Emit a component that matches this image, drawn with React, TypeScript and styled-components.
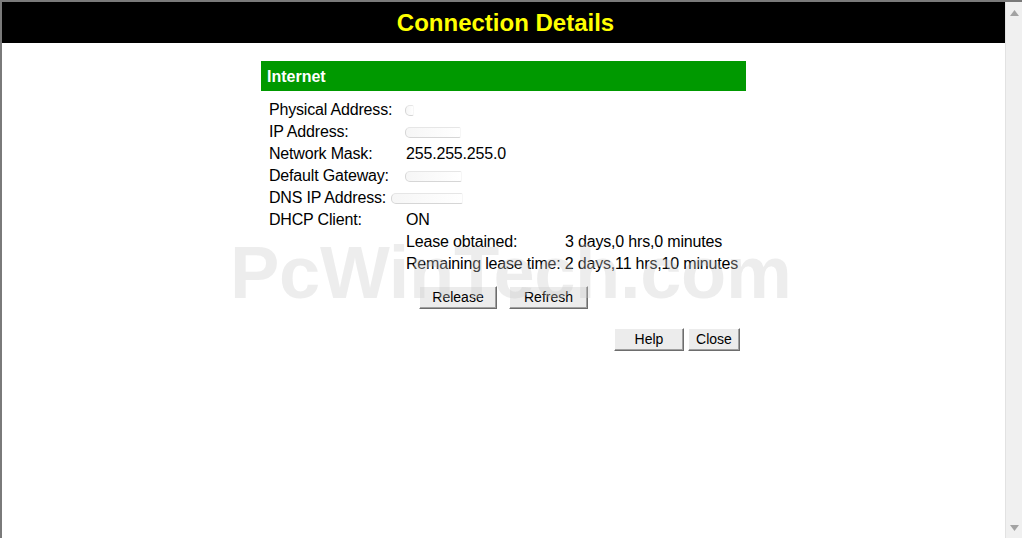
import React from "react";
import styled, { createGlobalStyle } from "styled-components";

const Global = createGlobalStyle`
  html, body { margin: 0; padding: 0; background: #fff; overflow: hidden; }
  body { font-family: "Liberation Sans", Arial, sans-serif; }
`;

const Frame = styled.div`
  width: 1022px;
  height: 538px;
  box-sizing: border-box;
  border-top: 2px solid #7a7a7a;
  border-left: 2px solid #7a7a7a;
  display: flex;
  position: relative;
  overflow: hidden;
`;

const Page = styled.div`
  flex: 1;
  display: flex;
  flex-direction: column;
  align-items: center;
`;

const Header = styled.div`
  align-self: stretch;
  height: 41px;
  background: #000;
  color: #ffff00;
  font-weight: bold;
  font-size: 24px;
  display: flex;
  align-items: center;
  justify-content: center;
  padding-left: 4px;
`;

const Panel = styled.div`
  width: 485px;
  margin-top: 18px;
  display: flex;
  flex-direction: column;
`;

const SectionBar = styled.div`
  height: 30px;
  background: #009900;
  color: #fff;
  font-weight: bold;
  font-size: 16px;
  display: flex;
  align-items: center;
  padding-left: 6px;
  padding-top: 1px;
  box-sizing: border-box;
`;

const Rows = styled.div`
  margin-top: 8px;
  padding-left: 8px;
  display: grid;
  grid-template-columns: 137px 159px auto;
  grid-auto-rows: 22px;
  font-size: 16px;
  letter-spacing: -0.18px;
  color: #000;
  align-items: center;
`;

const Cell = styled.div<{ $span?: number; $start?: number }>`
  white-space: nowrap;
  grid-column: ${(p) => (p.$start ? `${p.$start} / span ${p.$span ?? 1}` : `span ${p.$span ?? 1}`)};
  display: flex;
  align-items: center;
`;

const Smudge = styled.span<{ $w: number; $ml?: number }>`
  display: inline-block;
  width: ${(p) => p.$w}px;
  height: 9px;
  margin-left: ${(p) => p.$ml ?? 0}px;
  border: 1px solid #d6d6d6;
  border-right-color: transparent;
  border-top-color: #e6e6e6;
  border-radius: 5px 2px 2px 5px;
  background: linear-gradient(90deg, #f6f6f6, #fff);
  filter: blur(0.7px);
`;

const ButtonRow = styled.div<{ $pl?: number; $mt: number; $end?: boolean }>`
  display: flex;
  gap: 12px;
  margin-top: ${(p) => p.$mt}px;
  padding-left: ${(p) => p.$pl ?? 0}px;
  justify-content: ${(p) => (p.$end ? "flex-end" : "flex-start")};
  padding-right: ${(p) => (p.$end ? 6 : 0)}px;
`;

const Btn = styled.button<{ $w: number; $h?: number }>`
  width: ${(p) => p.$w}px;
  height: ${(p) => p.$h ?? 23}px;
  font-family: "Liberation Sans", Arial, sans-serif;
  font-size: 14px;
  color: #000;
  background: #ececec;
  border: 1px solid;
  border-color: #fff #6d6d6d #6d6d6d #fff;
  box-shadow: inset -1px -1px 0 #a0a0a0;
  padding: 0 0 2px;
  margin: 0;
`;

const Scrollbar = styled.div`
  width: 17px;
  background: #f0f0f0;
  border-left: 1px solid #e2e2e2;
  display: flex;
  flex-direction: column;
  justify-content: space-between;
  align-items: center;
  padding: 8px 0 7px;
  box-sizing: border-box;
`;

const Watermark = styled.div`
  position: absolute;
  left: 228px;
  top: 228px;
  font-size: 74px;
  font-weight: bold;
  letter-spacing: -0.3px;
  color: rgba(200, 200, 200, 0.33);
  pointer-events: none;
  white-space: nowrap;
`;

export default function App() {
  return (
    <>
      <Global />
      <Frame>
        <Page>
          <Header>Connection Details</Header>
          <Panel>
            <SectionBar>Internet</SectionBar>
            <Rows>
              <Cell>Physical Address:</Cell>
              <Cell $span={2}><Smudge $w={7} $ml={-1} /></Cell>
              <Cell>IP Address:</Cell>
              <Cell $span={2}><Smudge $w={54} $ml={-1} /></Cell>
              <Cell>Network Mask:</Cell>
              <Cell $span={2}>255.255.255.0</Cell>
              <Cell>Default Gateway:</Cell>
              <Cell $span={2}><Smudge $w={55} $ml={-1} /></Cell>
              <Cell>DNS IP Address:</Cell>
              <Cell $span={2}><Smudge $w={70} $ml={-15} /></Cell>
              <Cell>DHCP Client:</Cell>
              <Cell $span={2}>ON</Cell>
              <Cell $start={2}>Lease obtained:</Cell>
              <Cell>3 days,0 hrs,0 minutes</Cell>
              <Cell $start={2} $span={2}>Remaining lease time: 2 days,11 hrs,10 minutes</Cell>
            </Rows>
            <ButtonRow $pl={158} $mt={11}>
              <Btn $w={78}>Release</Btn>
              <Btn $w={79}>Refresh</Btn>
            </ButtonRow>
            <ButtonRow $mt={19} $end>
              <Btn $w={70} style={{ marginRight: -8 }}>Help</Btn>
              <Btn $w={52}>Close</Btn>
            </ButtonRow>
          </Panel>
        </Page>
        <Scrollbar>
          <svg width="9" height="6" viewBox="0 0 9 6"><path d="M4.5 0 L9 6 L0 6 Z" fill="#a3a3a3" /></svg>
          <svg width="9" height="6" viewBox="0 0 9 6"><path d="M0 0 L9 0 L4.5 6 Z" fill="#a3a3a3" /></svg>
        </Scrollbar>
        <Watermark>PcWinTech.com</Watermark>
      </Frame>
    </>
  );
}
